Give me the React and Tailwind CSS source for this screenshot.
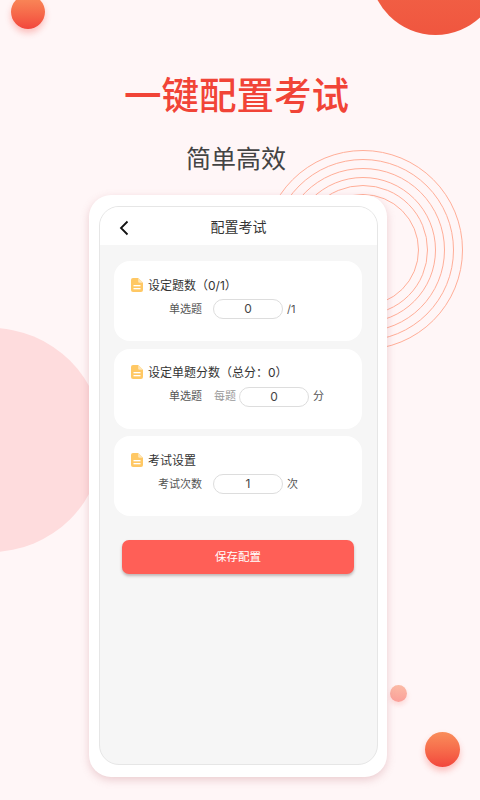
// 一键配置考试 promo screen
const FileIcon = () => (
  <svg width="12" height="14" viewBox="0 0 12 14" className="shrink-0 mb-[1px]">
    <path d="M2 0h5.200L12 4.800V12a2 2 0 0 1-2 2H2a2 2 0 0 1-2-2V2a2 2 0 0 1 2-2z" fill="#ffc864" />
    <path d="M7.200 0 12 4.800H8.400a1.200 1.200 0 0 1-1.200-1.200z" fill="#ffe6b8" />
    <rect x="2.500" y="7" width="7" height="1.300" fill="#fff" />
    <rect x="2.500" y="10" width="7" height="1.300" fill="#fff" />
  </svg>
);

const ValueBox = ({ value }) => (
  <div className="w-[70px] h-[20px] rounded-full border border-[#dddddd] bg-white flex items-center justify-center text-[12px] text-[#444444] shrink-0">
    {value}
  </div>
);

const ConfigCard = ({ title, children }) => (
  <div className="h-[80px] rounded-[16px] bg-white pt-[15px]">
    <div className="flex items-center h-[18px] pl-[17px] gap-[5px] text-[12px] text-[#333333]">
      <FileIcon />
      <span className="pt-[1px]">{title}</span>
    </div>
    <div className="flex items-center h-[20px] mt-[5px] text-[11px] text-[#555555]">{children}</div>
  </div>
);

const rings = [100, 91, 82, 73, 65, 56];

export default function App() {
  return (
    <div
      className="relative w-[480px] h-[800px] overflow-hidden bg-[#fff6f7] pl-[89px]"
      style={{ fontFamily: 'Inter, "Noto Sans CJK SC", "Noto Sans", sans-serif' }}
    >
      {/* Background decoration */}
      <div className="absolute left-[11px] top-[-5px] w-[34px] h-[34px] rounded-full bg-gradient-to-b from-[#f98d5b] to-[#f2453c] shadow-[0_4px_6px_rgba(242,69,60,0.3)]" />
      <div className="absolute left-[370px] top-[-96px] w-[131px] h-[131px] rounded-full bg-gradient-to-b from-[#f2704f] to-[#f0563f]" />
      <div className="absolute left-[-121px] top-[328px] w-[224px] h-[224px] rounded-full bg-[#fedcdd]" />
      <svg className="absolute left-[263px] top-[150px]" width="201" height="201" viewBox="0 0 201 201" fill="none">
        {rings.map((r) => (
          <circle key={r} cx="100" cy="100" r={r - 0.5} stroke="#ffae98" strokeWidth="1" />
        ))}
      </svg>
      <div className="absolute left-[390px] top-[685px] w-[17px] h-[17px] rounded-full bg-gradient-to-b from-[#fbbba6] to-[#fb9f99] shadow-[0_3px_5px_rgba(242,100,90,0.2)]" />
      <div className="absolute left-[425px] top-[732px] w-[35px] h-[35px] rounded-full bg-gradient-to-b from-[#f98d5b] to-[#f2453c] shadow-[0_4px_6px_rgba(242,69,60,0.3)]" />

      <div className="relative w-[298px] flex flex-col items-center">
        <h1 className="mt-[68px] mr-[3px] h-[56px] leading-[56px] text-[37.500px] font-medium text-[#f14437] whitespace-nowrap">一键配置考试</h1>
        <p className="mt-[16px] mr-[4px] h-[38px] leading-[38px] text-[25px] text-[#444444] whitespace-nowrap">简单高效</p>

        {/* Phone frame */}
        <div className="mt-[17px] w-[298px] h-[582px] rounded-[22px] bg-white pl-[10px] pr-[9px] pt-[11px] pb-[12px] shadow-[0_3px_9px_rgba(190,110,120,0.3)]">
          <div className="h-full rounded-[20px] border border-[#e6e6e6] bg-[#f6f6f6] overflow-hidden">
            <div className="relative h-[38px] bg-white flex items-center justify-center text-[14px] text-[#333333]">
              <svg className="absolute left-[19px] top-[13px]" width="10" height="16" viewBox="0 0 10 16" fill="none">
                <path d="M8.500 1.500 2 8l6.500 6.500" stroke="#111111" strokeWidth="1.800" />
              </svg>
              配置考试
            </div>
            <div className="pl-[14px] pr-[15px] pt-[16px] flex flex-col gap-[7.500px]">
              <ConfigCard title="设定题数（0/1）">
                <span className="w-[88px] text-right mr-[11px]">单选题</span>
                <ValueBox value="0" />
                <span className="ml-[4px]">/1</span>
              </ConfigCard>
              <ConfigCard title="设定单题分数（总分：0）">
                <span className="w-[88px] text-right mr-[12px]">单选题</span>
                <span className="text-[#999999] mr-[3px]">每题</span>
                <ValueBox value="0" />
                <span className="ml-[4px]">分</span>
              </ConfigCard>
              <ConfigCard title="考试设置">
                <span className="w-[88px] text-right mr-[11px]">考试次数</span>
                <ValueBox value="1" />
                <span className="ml-[4px]">次</span>
              </ConfigCard>
              <button className="mt-[16px] mx-[8px] h-[34px] pt-[3px] rounded-[7px] bg-[#ff5f57] text-[11.500px] text-white shadow-[0_2px_3px_rgba(90,60,60,0.35)]">
                保存配置
              </button>
            </div>
          </div>
        </div>
      </div>
    </div>
  );
}
